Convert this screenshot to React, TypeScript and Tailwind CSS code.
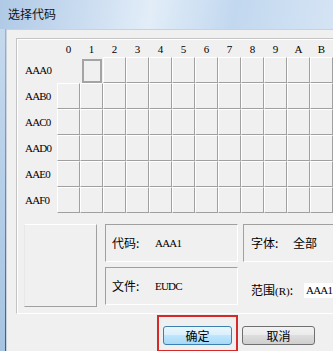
import React from "react";

const cols = ["0", "1", "2", "3", "4", "5", "6", "7", "8", "9", "A", "B"];
const rows = ["AAA0", "AAB0", "AAC0", "AAD0", "AAE0", "AAF0"];

const serif = "font-['Liberation_Serif','Noto_Sans_CJK_SC',serif]";
const cjk = "font-['Noto_Sans_CJK_SC','Liberation_Sans',sans-serif]";

function Cell({ r, c }: { r: number; c: number }) {
  if (r === 0 && c === 0) return <div className="w-[23px] h-[26px] shrink-0" />;
  if (r === 0 && c === 1)
    return (
      <div className="w-[23px] h-[26px] shrink-0 pl-[2px] pt-[2px]">
        <div className="w-[20px] h-[24px] border-2 border-[#a4a4a4] bg-[#f0f0f0]" />
      </div>
    );
  return (
    <div className="w-[23px] h-[26px] shrink-0 bg-[#f0f0f0] border-t border-l border-t-white border-l-white border-r border-b border-r-[#a0a0a0] border-b-[#a0a0a0]" />
  );
}

export default function App() {
  return (
    <div className={`w-[333px] h-[351px] overflow-hidden flex flex-col bg-[#f0f0f0] ${cjk}`}>
      {/* title bar */}
      <div className="h-[29px] shrink-0 flex items-start pl-[8px] pt-[6px] bg-[linear-gradient(100deg,#afc9e6_0%,#cadcf0_25%,#e2edf8_45%,#c2d8ef_70%,#d5e4f4_100%)]">
        <span className="text-[12px] leading-[16px] text-[#111]">选择代码</span>
      </div>
      <div className="flex flex-1 min-h-0">
        {/* left frame */}
        <div className="w-[5px] shrink-0 bg-[linear-gradient(to_bottom,#c4d9ee,#a6c4e2)]" />
        <div className="w-[1px] shrink-0 bg-[linear-gradient(to_bottom,#9fb3c8,#3f5f88)]" />
        {/* content */}
        <div className="flex-1 min-w-0 border-t border-l border-[#c9d2dc] bg-[#f0f0f0] flex flex-col">
          {/* panel */}
          <div className="ml-[9px] mt-[8px] w-[400px] h-[276px] shrink-0 border-t border-l border-[#c4c4c4] border-b border-b-white shadow-[inset_1px_1px_0_#ffffff] flex flex-col">
            {/* header */}
            <div className={`flex h-[18px] pt-[3px] ${serif} text-[11px] leading-[15px] text-black`}>
              <div className="w-[40px] shrink-0" />
              {cols.map((c) => (
                <div key={c} className="w-[23px] shrink-0 text-center">
                  {c}
                </div>
              ))}
            </div>
            {/* grid */}
            {rows.map((label, r) => (
              <div key={label} className="flex h-[26px]">
                <div className={`w-[40px] shrink-0 pl-[8px] flex items-center ${serif} text-[11px] tracking-[-0.8px] text-black`}>
                  {label}
                </div>
                {cols.map((c, ci) => (
                  <Cell key={c} r={r} c={ci} />
                ))}
              </div>
            ))}
            {/* bottom section */}
            <div className="flex mt-[11px] ml-[7px] gap-[8px]">
              <div className="w-[73px] h-[83px] shrink-0 border-t border-l border-t-white border-l-[#e8e8e8] border-r border-b border-r-[#a0a0a0] border-b-[#a0a0a0]" />
              <div className="flex flex-col gap-[5px] shrink-0">
                <div className="w-[133px] h-[38px] flex items-center pl-[6px] border-t border-l border-t-[#a0a0a0] border-l-[#a0a0a0] border-r border-b border-r-white border-b-white text-[12px] text-black">
                  <span className="w-[43px] shrink-0">代码:</span>
                  <span className={`${serif} text-[11px] tracking-[-0.8px]`}>AAA1</span>
                </div>
                <div className="w-[133px] h-[38px] flex items-center pl-[6px] border-t border-l border-t-[#a0a0a0] border-l-[#a0a0a0] border-r border-b border-r-white border-b-white text-[12px] text-black">
                  <span className="w-[43px] shrink-0">文件:</span>
                  <span className={`${serif} text-[11px] tracking-[-0.8px]`}>EUDC</span>
                </div>
              </div>
              <div className="flex flex-col -ml-[3px]">
                <div className="w-[140px] h-[38px] flex items-center pl-[7px] border-t border-l border-t-[#a0a0a0] border-l-[#a0a0a0] border-b border-b-white text-[12px] text-black">
                  <span className="w-[42px] shrink-0">字体:</span>
                  <span>全部</span>
                </div>
                <div className="flex items-center mt-[21px] pl-[8px] h-[15px]">
                  <span className="w-[53px] shrink-0 text-[12px] text-black whitespace-nowrap">
                    范围<span className={`${serif} text-[11px]`}>(R)</span>:
                  </span>
                  <div className={`w-[29px] h-[15px] bg-white pl-[2px] flex items-center overflow-hidden whitespace-nowrap ${serif} text-[11px] tracking-[-0.8px] text-black`}>
                    AAA1
                  </div>
                </div>
              </div>
            </div>
          </div>
          {/* buttons */}
          <div className="flex items-start mt-[1px] pl-[150px]">
            <div className="w-[81px] h-[37px] shrink-0 border-2 border-solid border-[#d42a2a] pl-[4px] pt-[9px]">
              <div className="w-[69px] h-[19px] rounded-[3px] border border-[#3c7fb1] bg-[linear-gradient(to_bottom,#eaf6fd_0%,#d9f0fc_45%,#bee6fd_50%,#a7d9f5_100%)] flex items-center justify-center text-[12px] leading-[16px] text-black">
                确定
              </div>
            </div>
            <div className="ml-[4px] mt-[11px] w-[73px] h-[19px] shrink-0 rounded-[3px] border border-[#707070] bg-[linear-gradient(to_bottom,#f2f2f2_0%,#ebebeb_45%,#dddddd_50%,#cfcfcf_100%)] flex items-center justify-center text-[12px] leading-[16px] text-black">
              取消
            </div>
          </div>
        </div>
      </div>
    </div>
  );
}
